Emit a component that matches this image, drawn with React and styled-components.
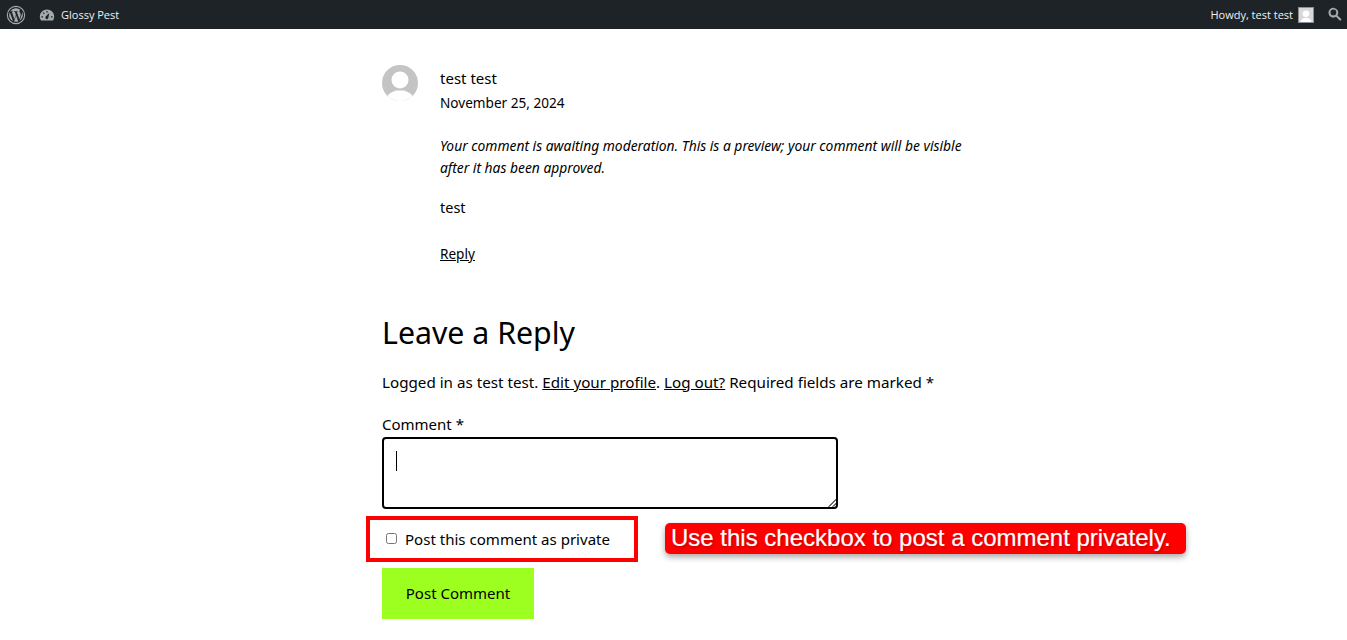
import React from 'react'
import styled, { createGlobalStyle } from 'styled-components'

const GlobalStyle = createGlobalStyle`
  html, body {
    margin: 0;
    background: #fff;
    overflow: hidden;
  }
  body {
    font-family: "Noto Sans", "Open Sans", sans-serif;
    color: #000;
  }
`

const AdminBar = styled.header`
  height: 29px;
  background: #1d2327;
  color: #f0f0f1;
  display: flex;
  align-items: center;
  justify-content: space-between;
  padding: 0 4px 0 6px;
  font-family: "Open Sans", "Noto Sans", sans-serif;
  font-size: 11px;
`

const BarGroup = styled.div`
  display: flex;
  align-items: center;
`

const BarIcon = styled.svg`
  display: block;
  width: ${p => p.$size || 18}px;
  height: ${p => p.$size || 18}px;
  margin: ${p => p.$margin || 0};
  fill: #a7aaad;
`

const SmallAvatar = styled.svg`
  display: block;
  width: 14px;
  height: 14px;
  margin: 0 14px 0 5px;
  border: 1px solid #8c8f94;
  background: #d8d8d8;
`

const Column = styled.main`
  width: 584px;
  margin-left: 382px;
`

const CommentRow = styled.article`
  display: flex;
  gap: 22px;
  padding-top: 36px;
`

const Avatar = styled.svg`
  display: block;
  flex: none;
  width: 36px;
  height: 36px;
  border-radius: 50%;
`

const CommentBody = styled.div`
  flex: 1;
`

const Author = styled.div`
  font-size: 15px;
  line-height: 24px;
  margin-top: 1px;
`

const CommentDate = styled.div`
  font-size: 13.6px;
  line-height: 24px;
  margin-top: 1px;
`

const Notice = styled.em`
  display: block;
  font-size: 13.84px;
  line-height: 22.4px;
  margin-top: 20px;
`

const CommentText = styled.p`
  margin: 15px 0 0;
  font-size: 14.5px;
  line-height: 24px;
`

const ReplyLink = styled.a`
  display: block;
  margin-top: 23px;
  font-size: 13.6px;
  line-height: 24px;
  color: #000;
  text-decoration: underline;
`

const Heading = styled.h2`
  margin: 45px 0 0;
  font-size: 30.3px;
  font-weight: 400;
  line-height: 44px;
`

const LoggedIn = styled.p`
  margin: 15px 0 0;
  font-size: 15.2px;
  line-height: 24px;
  white-space: nowrap;
`

const TextLink = styled.a`
  color: #000;
  text-decoration: underline;
`

const FieldLabel = styled.div`
  margin-top: 18px;
  font-size: 15px;
  line-height: 24px;
`

const BoxFrame = styled.div`
  position: relative;
  box-sizing: border-box;
  width: 456px;
  height: 72px;
  margin-top: 1px;
  padding: 12px 12px;
  border: 2px solid #000;
  border-radius: 4px;
`

const ResizeGrip = styled.span`
  position: absolute;
  right: 0;
  bottom: 0;
  width: 9px;
  height: 9px;
  background: repeating-linear-gradient(135deg, transparent 0 1.4px, #666 1.4px 2.8px);
  clip-path: polygon(100% 0, 100% 100%, 0 100%);
`

const Caret = styled.span`
  display: block;
  width: 1px;
  height: 20px;
  background: #000;
`

const PrivateRow = styled.div`
  display: flex;
  align-items: center;
  width: 830px;
  gap: 27px;
  margin: 7px 0 0 -16px;
`

const PrivateBox = styled.label`
  flex: none;
  box-sizing: border-box;
  width: 272px;
  height: 46px;
  display: flex;
  align-items: center;
  border: 4px solid #f00;
  padding-left: 16px;
  font-size: 15.05px;
  white-space: nowrap;
`

const Check = styled.input`
  flex: none;
  width: 11px;
  height: 11px;
  margin: 0 8px 0 0;
  accent-color: #767676;
`

const Callout = styled.div`
  flex: none;
  box-sizing: border-box;
  height: 31px;
  padding: 0 15px 0 6px;
  background: #f00;
  border-radius: 5px;
  box-shadow: 0 3px 6px rgba(0, 0, 0, 0.35);
  color: #fff;
  font-family: "Liberation Sans", Arial, sans-serif;
  font-size: 24px;
  line-height: 29px;
  white-space: nowrap;
  -webkit-text-stroke: 0.2px #fff;
  text-shadow: 1px 2px 3px rgba(0, 0, 0, 0.25);
`

const SubmitButton = styled.button`
  display: block;
  width: 152px;
  height: 51px;
  margin-top: 6px;
  border: 0;
  background: #9dff20;
  color: #000;
  font-family: "Noto Sans", sans-serif;
  font-size: 15px;
`

function WpLogo() {
  return (
    <BarIcon $size={20} $margin="0 13px 0 0" viewBox="0 0 20 20">
      <path d="M10 .8a9.2 9.2 0 1 0 0 18.4A9.2 9.2 0 0 0 10 .8zm0 1.1a8.1 8.1 0 1 1 0 16.2 8.1 8.1 0 0 1 0-16.2zM3.2 10a6.8 6.8 0 0 0 3.8 6.1L3.8 7.2A6.8 6.8 0 0 0 3.2 10zm11.4-.4c0-.8-.3-1.4-.6-1.9-.3-.5-.6-1-.6-1.5 0-.6.5-1.2 1.1-1.2h.1A6.8 6.8 0 0 0 4.3 6.3h.5c.7 0 1.8-.1 1.8-.1.4 0 .4.5 0 .6l-.7.1 2.5 7.3 1.5-4.4-1-2.9-.8-.1c-.4 0-.3-.6 0-.6 0 0 1.1.1 1.8.1s1.8-.1 1.8-.1c.4 0 .4.5 0 .6l-.8.1 2.5 7.3.7-2.3c.3-.9.5-1.6.5-2.2zm-4.5 1-2 5.9a6.8 6.8 0 0 0 4.2-.1l-.1-.1-2.1-5.7zm5.9-3.8.1.7c0 .7-.1 1.4-.5 2.4l-2.1 6a6.8 6.8 0 0 0 2.5-9.1z" />
    </BarIcon>
  )
}

function Dashboard() {
  return (
    <BarIcon $size={16} $margin="0 6px 0 0" viewBox="0 0 20 20">
      <path d="M10 3a9 9 0 0 0-9 9c0 1.9.6 3.6 1.6 5h14.8a9 9 0 0 0 1.6-5 9 9 0 0 0-9-9zM5 13H3v-1.5h2V13zm1.2-4L4.8 7.6l1-1L7.2 8l-1 1zM10.8 7H9.3V5h1.5v2zm.7 7.5a2 2 0 0 1-3.4-2c.3-.6 4.8-4.9 4.8-4.9s-1.1 6.3-1.4 6.9zM17 13h-2v-1.5h2V13z" />
    </BarIcon>
  )
}

function Search() {
  return (
    <BarIcon $size={15} viewBox="0 0 20 20">
      <path d="M12.6 11.2a6.5 6.5 0 1 0-1.9 1.9l4.6 4.6a1.4 1.4 0 0 0 2-2l-4.7-4.5zM7.2 11a3.8 3.8 0 1 1 0-7.6 3.8 3.8 0 0 1 0 7.6z" />
    </BarIcon>
  )
}

function Person({ bg, fg }) {
  return (
    <>
      <rect width="36" height="36" fill={bg} />
      <circle cx="18" cy="15" r="8.5" fill={fg} />
      <path d="M4 36c0-6 5-9 10-10.500h8c5 1.500 10 4.500 10 10.500z" fill={fg} />
    </>
  )
}

export default function App() {
  return (
    <>
      <GlobalStyle />
      <AdminBar>
        <BarGroup>
          <WpLogo />
          <Dashboard />
          <span>Glossy Pest</span>
        </BarGroup>
        <BarGroup>
          <span>Howdy, test test</span>
          <SmallAvatar viewBox="0 0 36 36">
            <Person bg="#d8d8d8" fg="#fff" />
          </SmallAvatar>
          <Search />
        </BarGroup>
      </AdminBar>
      <Column>
        <CommentRow>
          <Avatar viewBox="0 0 36 36">
            <Person bg="#c4c4c4" fg="#fff" />
          </Avatar>
          <CommentBody>
            <Author>test test</Author>
            <CommentDate>November 25, 2024</CommentDate>
            <Notice>
              Your comment is awaiting moderation. This is a preview; your comment will be visible after it has been approved.
            </Notice>
            <CommentText>test</CommentText>
            <ReplyLink href="#reply">Reply</ReplyLink>
          </CommentBody>
        </CommentRow>
        <Heading>Leave a Reply</Heading>
        <LoggedIn>
          Logged in as test test. <TextLink href="#profile">Edit your profile</TextLink>. <TextLink href="#logout">Log out?</TextLink> Required fields are marked *
        </LoggedIn>
        <FieldLabel>Comment *</FieldLabel>
        <BoxFrame>
          <Caret />
          <ResizeGrip />
        </BoxFrame>
        <PrivateRow>
          <PrivateBox>
            <Check type="checkbox" />
            Post this comment as private
          </PrivateBox>
          <Callout>Use this checkbox to post a comment privately.</Callout>
        </PrivateRow>
        <SubmitButton type="button">Post Comment</SubmitButton>
      </Column>
    </>
  )
}
